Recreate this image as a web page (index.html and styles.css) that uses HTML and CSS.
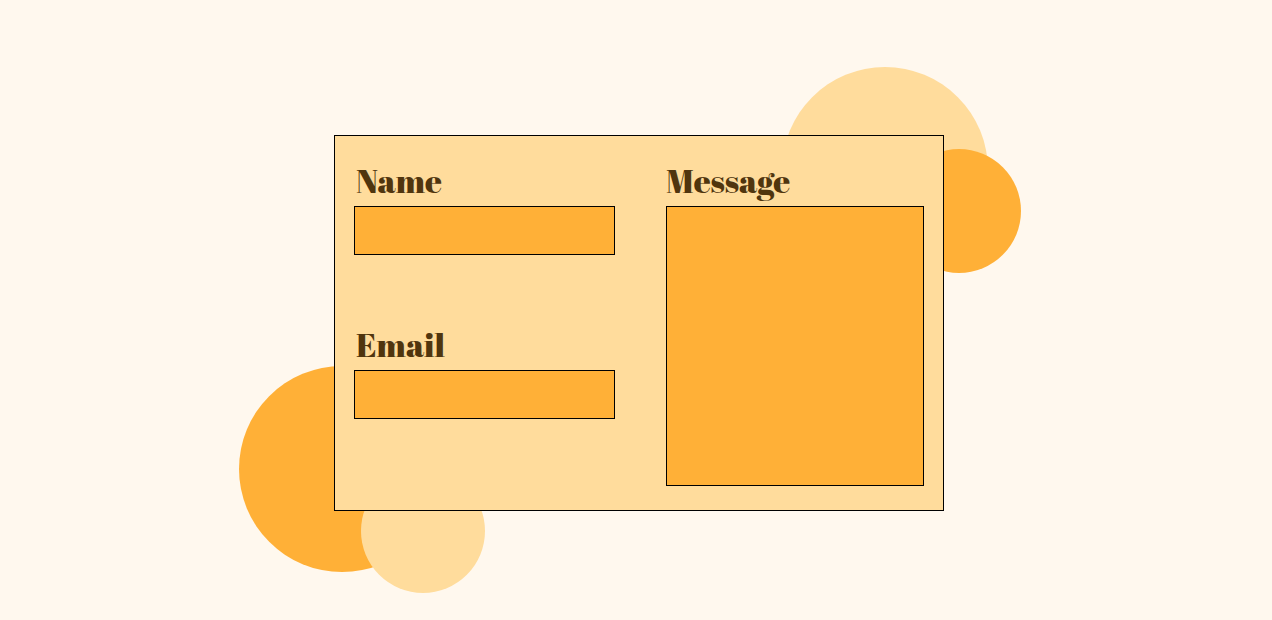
FILE: index.html
```html
<!DOCTYPE html>
<html lang="en">
<head>
<meta charset="utf-8">
<meta name="viewport" content="width=device-width, initial-scale=1">
<title>Contact</title>
<link rel="stylesheet" href="styles.css">
</head>
<body>
<main class="page">
  <div class="scene">
    <span class="circle circle-top-large"></span>
    <span class="circle circle-top-small"></span>
    <span class="circle circle-bottom-large"></span>
    <span class="circle circle-bottom-small"></span>
    <form class="card">
      <div class="column">
        <div class="field">
          <label class="label label-inset" for="name">Name</label>
          <input class="control" id="name" name="name" type="text">
        </div>
        <div class="field">
          <label class="label label-inset" for="email">Email</label>
          <input class="control" id="email" name="email" type="email">
        </div>
      </div>
      <div class="field">
        <label class="label" for="message">Message</label>
        <textarea class="control control-message" id="message" name="message"></textarea>
      </div>
    </form>
  </div>
</main>
</body>
</html>
```

FILE: styles.css
```css
* {
  box-sizing: border-box;
}

body {
  margin: 0;
  background: #fff8ee;
}

.page {
  display: flex;
  align-items: center;
  justify-content: center;
  min-height: 100vh;
  padding: 26px 0 0 6px;
}

.scene {
  position: relative;
  width: 100%;
  max-width: 610px;
}

.circle {
  position: absolute;
  border-radius: 50%;
}

.circle-top-large,
.circle-bottom-large {
  width: 206px;
  height: 206px;
}

.circle-top-small,
.circle-bottom-small {
  width: 124px;
  height: 124px;
}

.circle-top-large {
  top: -68px;
  right: -44px;
  background: #ffdc9c;
}

.circle-top-small {
  top: 14px;
  right: -77px;
  background: #ffb037;
}

.circle-bottom-large {
  bottom: -61px;
  left: -95px;
  background: #ffb037;
}

.circle-bottom-small {
  bottom: -82px;
  left: 27px;
  background: #ffdc9c;
}

.card {
  position: relative;
  display: grid;
  grid-template-columns: 261fr 258fr;
  gap: 51px;
  padding: 24px 19px;
  border: 1px solid #000;
  background: #ffdc9c;
}

.column {
  display: flex;
  flex-direction: column;
  gap: 69px;
}

.field {
  display: flex;
  flex-direction: column;
}

.label {
  padding-bottom: 4px;
  color: #50350e;
  font: 400 33px/42px "Abril Fatface", "Liberation Serif", serif;
}

.label-inset {
  padding-left: 2px;
}

.control {
  width: 100%;
  height: 49px;
  margin: 0;
  padding: 8px 12px;
  border: 1px solid #000;
  border-radius: 0;
  background: #ffb037;
  color: #50350e;
  font: 18px/24px "Liberation Serif", serif;
}

.control-message {
  height: 280px;
  resize: none;
}
```
